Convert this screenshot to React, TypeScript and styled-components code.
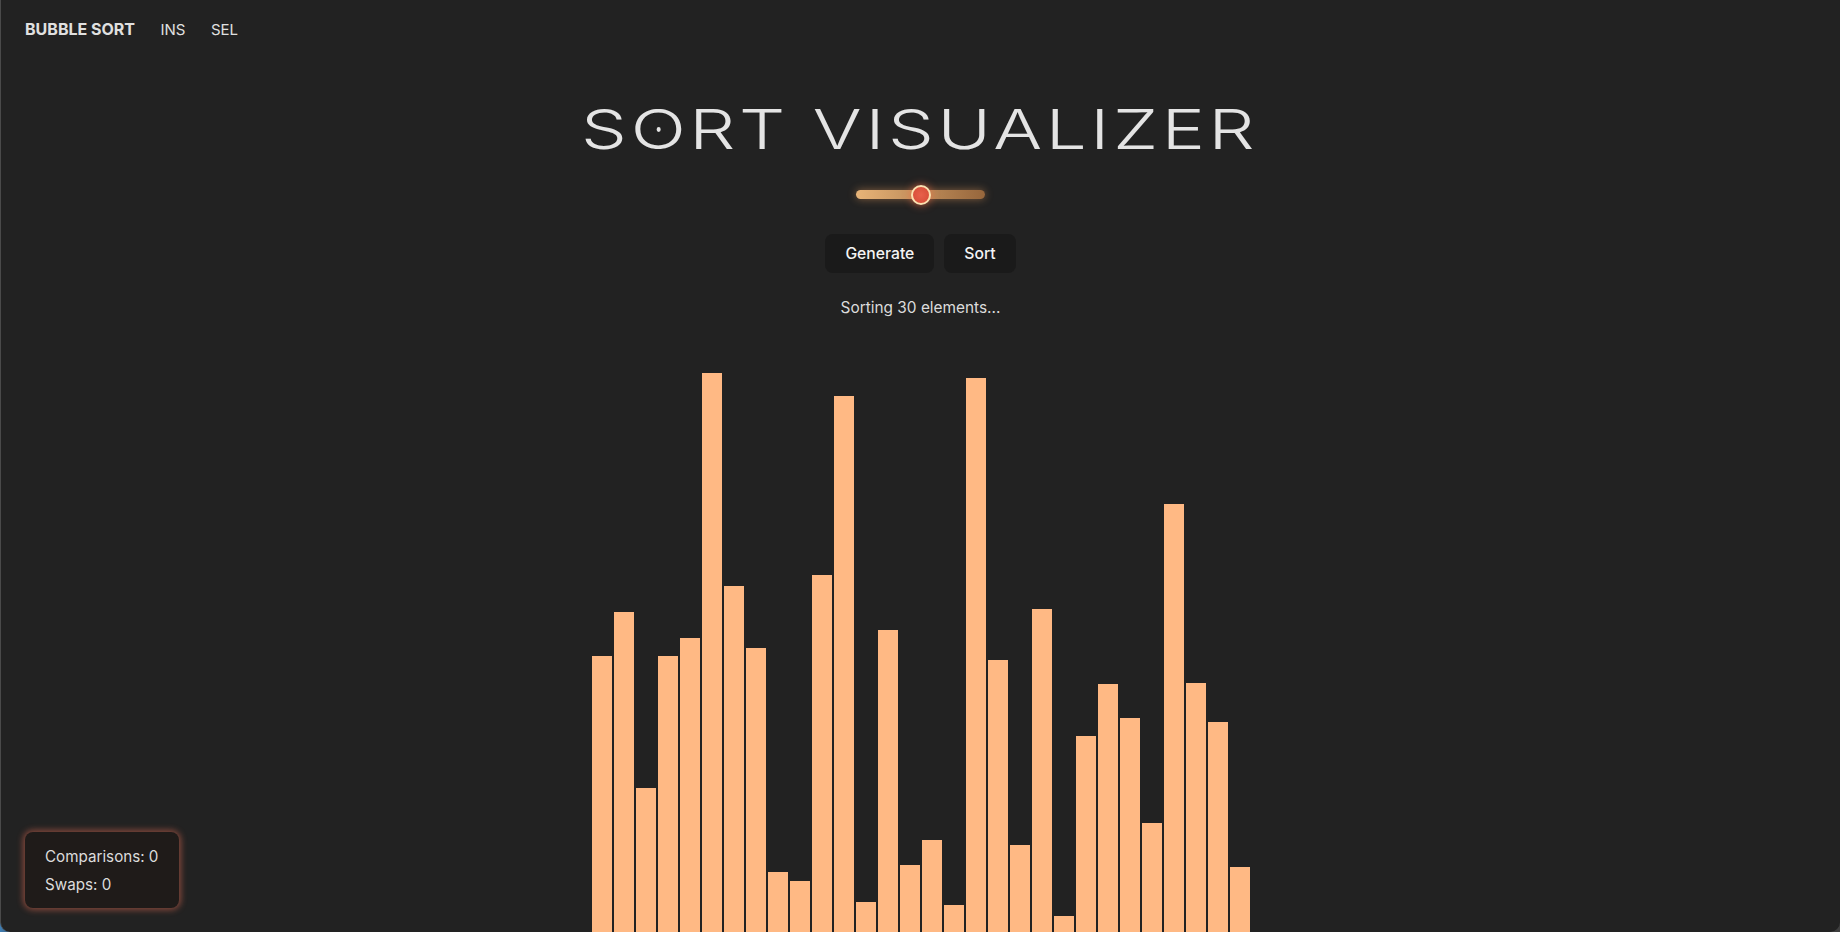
import styled, { createGlobalStyle } from 'styled-components';

const GlobalStyle = createGlobalStyle`
  html, body {
    margin: 0;
    height: 100%;
    background: linear-gradient(90deg, #3f7fb5 0, #3f3f3f 20px);
  }

  body {
    font-family: Inter, "Liberation Sans", sans-serif;
    color: #e0e0e0;
    overflow: hidden;
  }
`;

const Page = styled.div`
  box-sizing: border-box;
  position: relative;
  height: 932px;
  overflow: hidden;
  display: flex;
  flex-flow: column nowrap;
  align-items: center;
  background: #222222;
  border-left: 1px solid #4a4a4a;
  border-radius: 0 0 10px 10px;
`;

const Nav = styled.nav`
  align-self: stretch;
  display: flex;
  align-items: center;
  gap: 25.5px;
  height: 58px;
  padding-left: 24px;
  font-size: 15px;
`;

const NavItem = styled.a<{ $active?: boolean }>`
  color: #e0e0e0;
  font-size: ${(p) => (p.$active ? '16px' : '15px')};
  font-weight: ${(p) => (p.$active ? 700 : 400)};
`;

const Title = styled.h1`
  margin: 37px 0 0 -5px;
  font-size: 55px;
  line-height: 68px;
  font-weight: 350;
  letter-spacing: 0.05em;
  text-indent: 0.05em;
  color: #e4e4e4;
  white-space: nowrap;
  transform: scaleX(1.32);
`;

const DottedLetter = styled.span`
  position: relative;

  &::after {
    content: '';
    position: absolute;
    left: calc(50% - 0.025em - 1.5px);
    top: 50%;
    width: 3.5px;
    height: 5px;
    margin-top: -2px;
    border-radius: 50%;
    background: #e4e4e4;
  }
`;

const SpeedSlider = styled.input`
  appearance: none;
  display: block;
  width: 129px;
  height: 9px;
  margin: 27px 0 0;
  border-radius: 5px;
  background: linear-gradient(90deg, #e8b478, #96663c);
  box-shadow: 0 0 9px rgba(255, 170, 100, 0.45);

  &::-webkit-slider-thumb {
    appearance: none;
    width: 20px;
    height: 20px;
    border-radius: 50%;
    background: radial-gradient(circle, #e8604a, #d44a35);
    border: 2px solid #fbe0b0;
    box-sizing: border-box;
    box-shadow: 0 0 8px rgba(255, 110, 70, 0.7);
  }
`;

const Controls = styled.div`
  display: flex;
  gap: 10px;
  margin-top: 35px;
`;

const Button = styled.button`
  height: 39px;
  padding: 0 20px;
  border: 0;
  border-radius: 8px;
  background: #1a1a1a;
  color: #f4f4f4;
  font: 500 15.7px Inter, "Liberation Sans", sans-serif;
`;

const Status = styled.p`
  margin: 25px 0 0;
  font-size: 15.4px;
  line-height: 20px;
  color: #dcdcdc;
`;

const Bars = styled.div`
  flex: 1 1 auto;
  align-self: stretch;
  display: flex;
  align-items: flex-end;
  justify-content: center;
  gap: 2px;
`;

const Bar = styled.div`
  flex: 0 0 20px;
  background: #ffb984;
`;

const Stats = styled.div`
  position: absolute;
  left: 24px;
  bottom: 24px;
  width: 154px;
  box-sizing: border-box;
  padding: 11px 20px 9px;
  border-radius: 8px;
  background: #1f1b19;
  box-shadow: 0 0 6px 2px rgba(255, 120, 90, 0.45);
  font-size: 15.2px;
  line-height: 28px;
  color: #dcdcdc;
  white-space: nowrap;
`;

const BAR_TOPS = [
  656, 612, 788, 656, 638, 373, 586, 648, 872, 881, 575, 396, 902, 630, 865, 840, 905, 378, 660, 845,
  609, 916, 736, 684, 718, 823, 504, 683, 722, 867,
];

const App = () => (
  <>
    <GlobalStyle />
    <Page>
      <Nav>
        <NavItem $active>BUBBLE SORT</NavItem>
        <NavItem>INS</NavItem>
        <NavItem>SEL</NavItem>
      </Nav>
      <Title>
        S<DottedLetter>O</DottedLetter>RT VISUALIZER
      </Title>
      <SpeedSlider type="range" min={0} max={100} defaultValue={50} />
      <Controls>
        <Button>Generate</Button>
        <Button>Sort</Button>
      </Controls>
      <Status>Sorting 30 elements...</Status>
      <Bars>
        {BAR_TOPS.map((top, i) => (
          <Bar key={i} style={{ height: 932 - top }} />
        ))}
      </Bars>
      <Stats>
        <div>Comparisons: 0</div>
        <div>Swaps: 0</div>
      </Stats>
    </Page>
  </>
);

export default App;
